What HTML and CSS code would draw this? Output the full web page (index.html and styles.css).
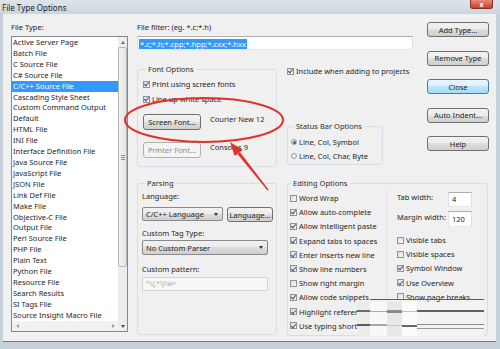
FILE: index.html
```html
<!DOCTYPE html>
<html lang="en">
<head>
    <meta charset="UTF-8">
    <title>File Type Options</title>
    <link rel="stylesheet" href="styles.css">
</head>
<body>
    <div class="window">
        <div class="titlebar">
            <span class="title">File Type Options</span>
            <span class="close">x</span>
        </div>

        <div class="client">
            <div class="types">
                <div class="lbl">File Type:</div>
                <div class="listbox">
                    <ul class="items">
                        <li>Active Server Page</li>
                        <li>Batch File</li>
                        <li>C Source File</li>
                        <li>C# Source File</li>
                        <li class="selected">C/C++ Source File</li>
                        <li>Cascading Style Sheet</li>
                        <li>Custom Command Output</li>
                        <li>Default</li>
                        <li>HTML File</li>
                        <li>INI File</li>
                        <li>Interface Definition File</li>
                        <li>Java Source File</li>
                        <li>JavaScript File</li>
                        <li>JSON File</li>
                        <li>Link Def File</li>
                        <li>Make File</li>
                        <li>Objective-C File</li>
                        <li>Output File</li>
                        <li>Perl Source File</li>
                        <li>PHP File</li>
                        <li>Plain Text</li>
                        <li>Python File</li>
                        <li>Resource File</li>
                        <li>Search Results</li>
                        <li>SI Tags File</li>
                        <li>Source Insight Macro File</li>
                    </ul>
                    <div class="vscroll">
                        <span class="arr up"></span>
                        <span class="thumb"><i></i></span>
                        <span class="track"></span>
                        <span class="arr down"></span>
                    </div>
                    <div class="hscroll">
                        <span class="arr left"></span>
                        <span class="track"></span>
                        <span class="arr right"></span>
                    </div>
                </div>
            </div>

            <div class="main">
                <div class="filter">
                    <div class="lbl">File filter: (eg. *.c;*.h)</div>
                    <div class="edit filter-edit"><span class="sel">*.c;*.h;*.cpp;*.hpp;*.cxx;*.hxx</span></div>
                </div>

                <div class="buttons">
                    <button class="btn">Add Type...</button>
                    <button class="btn">Remove Type</button>
                    <button class="btn default">Close</button>
                    <button class="btn">Auto Indent...</button>
                    <button class="btn">Help</button>
                </div>

                <fieldset class="group font-opts">
                    <legend>Font Options</legend>
                    <div class="row"><span class="cb on"></span>Print using screen fonts</div>
                    <div class="row gap5"><span class="cb on"></span>Line up white space</div>
                    <div class="font-row first">
                        <button class="btn font-btn">Screen Font...</button>
                        <span class="font-name">Courier New 12</span>
                    </div>
                    <div class="font-row second">
                        <button class="btn font-btn" disabled>Printer Font...</button>
                        <span class="font-name">Consolas 9</span>
                    </div>
                </fieldset>

                <div class="col2">
                    <div class="row include"><span class="cb on"></span>Include when adding to projects</div>
                    <fieldset class="group status">
                        <legend>Status Bar Options</legend>
                        <div class="row"><span class="rb on"></span>Line, Col, Symbol</div>
                        <div class="row gap4"><span class="rb"></span>Line, Col, Char, Byte</div>
                    </fieldset>
                </div>

                <fieldset class="group parsing">
                    <legend>Parsing</legend>
                    <div class="lbl">Language:</div>
                    <div class="lang-row">
                        <div class="combo lang">C/C++ Language</div>
                        <button class="btn lang-btn">Language...</button>
                    </div>
                    <div class="lbl tag-lbl">Custom Tag Type:</div>
                    <div class="combo parser">No Custom Parser</div>
                    <div class="lbl pattern-lbl">Custom pattern:</div>
                    <div class="edit pattern">^\{,*\}\w+</div>
                </fieldset>

                <fieldset class="group editing">
                    <legend>Editing Options</legend>
                    <div class="ed-cols">
                        <div class="ed-left">
                            <div class="row"><span class="cb"></span>Word Wrap</div>
                            <div class="row"><span class="cb on"></span>Allow auto-complete</div>
                            <div class="row"><span class="cb on"></span>Allow intelligent paste</div>
                            <div class="row"><span class="cb on"></span>Expand tabs to spaces</div>
                            <div class="row"><span class="cb on"></span>Enter inserts new line</div>
                            <div class="row"><span class="cb on"></span>Show line numbers</div>
                            <div class="row"><span class="cb"></span>Show right margin</div>
                            <div class="row"><span class="cb on"></span>Allow code snippets</div>
                            <div class="row"><span class="cb on"></span>Highlight references</div>
                            <div class="row"><span class="cb on"></span>Use typing shortcuts</div>
                        </div>
                        <div class="ed-right">
                            <div class="num-row"><span class="num-lbl">Tab width:</span><div class="edit num">4</div></div>
                            <div class="num-row margin-row"><span class="num-lbl">Margin width:</span><div class="edit num">120</div></div>
                            <div class="ed-checks">
                                <div class="row"><span class="cb"></span>Visible tabs</div>
                                <div class="row"><span class="cb"></span>Visible spaces</div>
                                <div class="row"><span class="cb on"></span>Symbol Window</div>
                                <div class="row"><span class="cb on"></span>Use Overview</div>
                                <div class="row"><span class="cb"></span>Show page breaks</div>
                            </div>
                        </div>
                    </div>
                </fieldset>
            </div>
        </div>

        <!-- red markup drawn over the screenshot -->
        <svg class="annot" width="500" height="349" viewBox="0 0 500 349">
            <ellipse cx="204" cy="120" rx="79" ry="22" fill="none" stroke="#e2302a" stroke-width="2"/>
            <polygon points="268.5,189.6 239.9,152.1 237.5,153.9 267.5,190.4" fill="#e2302a"/>
            <polygon points="230,142 242.6,149.9 234.7,156.1" fill="#e2302a"/>
        </svg>

        <div class="glitch"></div>
    </div>
</body>
</html>
```

FILE: styles.css
```css
* {
    box-sizing: border-box;
}

html, body {
    margin: 0;
}

body {
    width: 500px;
    height: 349px;
    overflow: hidden;
    font-family: "Noto Sans", "Liberation Sans", sans-serif;
    font-size: 7.5px;
    color: #1e1e1e;
    background: #c6d0da;
}

.window {
    position: relative;
    width: 500px;
    height: 349px;
    display: flex;
    flex-direction: column;
    background: #c6d0da;
}

.titlebar {
    height: 14px;
    display: flex;
    align-items: center;
    padding-left: 2px;
    background: linear-gradient(#dde4ec, #cbd5df);
}

.title {
    font-size: 8px;
    color: #1b1b1b;
}

.close {
    align-self: flex-start;
    margin-left: auto;
    margin-right: 7px;
    width: 23px;
    height: 9px;
    display: flex;
    justify-content: center;
    align-items: center;
    font-size: 7px;
    font-weight: bold;
    line-height: 1;
    color: #fff;
    background: linear-gradient(#e88b7c, #c7402c);
    border: 1px solid #8c3024;
    border-top: none;
    border-radius: 0 0 3px 3px;
}

.client {
    flex: 1;
    display: flex;
    margin: 0 4px 7px 3px;
    padding: 8px 0 0 8px;
    background: #f0f0f0;
    border-bottom: 1px solid #6f777f;
}

.lbl {
    line-height: 10px;
    white-space: nowrap;
}

/* file type list */
.types {
    width: 117px;
    display: flex;
    flex-direction: column;
}

.types .lbl {
    margin-bottom: 4px;
}

.listbox {
    height: 296px;
    border: 1px solid #828790;
    background: #fff;
    display: grid;
    grid-template-columns: 1fr 9px;
    grid-template-rows: 1fr 10px;
}

.items {
    list-style: none;
    margin: 0;
    padding: 0;
    overflow: hidden;
}

.items li {
    height: 10.92px;
    line-height: 10.92px;
    padding-left: 1px;
    white-space: nowrap;
}

.items li.selected {
    background: #3399ff;
    color: #fff;
}

.vscroll {
    grid-column: 2;
    grid-row: 1 / 3;
    display: flex;
    flex-direction: column;
    background: #ececec;
}

.hscroll {
    grid-column: 1;
    grid-row: 2;
    display: flex;
    background: #f2f2f2;
}

.track {
    flex: 1;
}

.arr {
    width: 9px;
    height: 10px;
    flex: none;
    display: flex;
    justify-content: center;
    align-items: center;
}

.hscroll .arr {
    width: 10px;
}

.arr::after {
    content: '';
    border: 2.5px solid transparent;
}

.arr.up::after {
    border-bottom: 3px solid #6a6a6a;
    border-top-width: 0;
}

.arr.down::after {
    border-top: 3px solid #4a4a4a;
    border-bottom-width: 0;
}

.arr.left::after {
    border-right: 3px solid #a0a0a0;
    border-left-width: 0;
}

.arr.right::after {
    border-left: 3px solid #a0a0a0;
    border-right-width: 0;
}

.thumb {
    height: 220px;
    flex: none;
    border: 1px solid #b5b5b5;
    border-radius: 2px;
    background: linear-gradient(to right, #f4f4f4, #e3e3e3);
    display: flex;
    justify-content: center;
    align-items: center;
}

.thumb i {
    width: 4px;
    height: 5px;
    background: repeating-linear-gradient(#8c8c8c 0 1px, transparent 1px 2px);
}

/* right side */
.main {
    margin-left: 9px;
    display: grid;
    grid-template-columns: 140px 136px 76px;
    align-content: start;
}

.filter {
    grid-column: 1 / 3;
    grid-row: 1;
}

.edit {
    height: 14px;
    background: #fff;
    border: 1px solid;
    border-color: #abadb3 #dbdfe6 #e3e9ef #e2e3ea;
    line-height: 12px;
    padding-left: 3px;
    white-space: nowrap;
}

.filter-edit {
    margin-top: 4px;
    padding-left: 1px;
    padding-top: 1px;
}

.sel {
    display: inline-block;
    height: 10px;
    line-height: 10px;
    padding: 0 1px;
    background: #3399ff;
    color: #fff;
}

.buttons {
    grid-column: 3;
    grid-row: 1 / 3;
    justify-self: end;
    align-self: start;
    width: 62px;
    display: flex;
    flex-direction: column;
    gap: 13.5px;
}

.btn {
    height: 15px;
    padding: 0;
    font: inherit;
    color: #1e1e1e;
    border: 1px solid #707070;
    border-radius: 3px;
    background: linear-gradient(#f2f2f2 0%, #ebebeb 50%, #dddddd 50%, #cfcfcf 100%);
    white-space: nowrap;
}

.btn.default {
    border-color: #3c7fb1;
    background: linear-gradient(#eaf6fd 0%, #d9f0fc 50%, #bee6fd 50%, #a7d9f5 100%);
}

.btn:disabled {
    border-color: #adb2b5;
    background: #f4f4f4;
    color: #8a8a8a;
}

.group {
    margin: 0;
    padding: 0;
    min-width: 0;
    border: 1px solid #d5dfe5;
    border-radius: 3px;
}

.group legend {
    margin-left: 3px;
    padding: 0 2px;
    line-height: 10px;
    color: #2a2a2a;
}

.row {
    height: 10px;
    line-height: 10px;
    display: flex;
    align-items: center;
    gap: 2px;
    white-space: nowrap;
}

.gap5 {
    margin-top: 5px;
}

.gap4 {
    margin-top: 4px;
}

.cb {
    width: 7px;
    height: 7px;
    flex: none;
    border: 1px solid #939393;
    background: linear-gradient(135deg, #dadada, #fafafa);
    display: flex;
    justify-content: center;
    align-items: center;
}

.cb.on::after {
    content: '';
    width: 2px;
    height: 4px;
    margin-top: -1px;
    border: solid #3f5486;
    border-width: 0 1.4px 1.4px 0;
    transform: rotate(40deg);
}

.rb {
    width: 6px;
    height: 6px;
    flex: none;
    border: 1px solid #9a9a9a;
    border-radius: 50%;
    background: radial-gradient(#fff, #dcdcdc);
    display: flex;
    justify-content: center;
    align-items: center;
}

.rb.on::after {
    content: '';
    width: 3px;
    height: 3px;
    border-radius: 50%;
    background: #2d5f9e;
}

/* font options */
.font-opts {
    grid-column: 1;
    grid-row: 2;
    margin-top: 14px;
    height: 103px;
    padding: 5px 0 0 5px;
}

.font-row {
    display: flex;
    align-items: flex-start;
}

.font-row.first {
    margin-top: 10px;
}

.font-row.second {
    margin-top: 12px;
}

.font-btn {
    width: 58px;
    height: 16px;
}

.font-name {
    margin-left: 9px;
    line-height: 10px;
    white-space: nowrap;
}

/* include + status bar */
.col2 {
    grid-column: 2;
    grid-row: 2;
    margin-left: 10px;
    display: flex;
    flex-direction: column;
}

.include {
    margin-top: 16px;
}

.status {
    margin-top: 45px;
    width: 96px;
    height: 44px;
    padding: 6px 0 0 3px;
}

/* parsing */
.parsing {
    grid-column: 1;
    grid-row: 3;
    margin-top: 11px;
    height: 157px;
    padding: 3px 0 0 4px;
}

.lang-row {
    display: flex;
    gap: 4px;
    margin-top: 6px;
}

.combo {
    height: 14px;
    display: flex;
    align-items: center;
    justify-content: space-between;
    padding: 0 4px 0 3px;
    border: 1px solid #8a8a8a;
    border-radius: 2px;
    background: linear-gradient(#f2f2f2 0%, #ebebeb 50%, #dddddd 50%, #cfcfcf 100%);
    white-space: nowrap;
}

.combo::after {
    content: '';
    border: 2px solid transparent;
    border-top: 3px solid #333;
    border-bottom-width: 0;
}

.combo.lang {
    width: 81px;
}

.combo.parser {
    width: 126px;
    height: 15px;
    margin-top: 2px;
}

.lang-btn {
    width: 46px;
}

.tag-lbl {
    margin-top: 6px;
}

.pattern-lbl {
    margin-top: 9px;
}

.pattern {
    width: 126px;
    margin-top: 3px;
    background: #f7f7f7;
    border-color: #d0d3d8;
    color: #a8a8a8;
    font-size: 6.5px;
}

/* editing options */
.editing {
    grid-column: 2 / 4;
    grid-row: 3;
    justify-self: start;
    margin: 11px 0 0 10px;
    width: 201px;
    height: 158px;
}

.ed-cols {
    display: flex;
    height: 148px;
}

.ed-left {
    width: 98px;
    padding: 5px 0 0 2px;
    display: flex;
    flex-direction: column;
    gap: 4.2px;
}

.ed-right {
    flex: 1;
    padding: 4px 0 0 10px;
    border-left: 1px solid #e4e4e4;
}

.num-row {
    display: flex;
    align-items: flex-start;
}

.num-lbl {
    width: 51px;
    line-height: 10px;
    white-space: nowrap;
}

.num {
    width: 24px;
    height: 15px;
    line-height: 13px;
}

.margin-row {
    margin-top: 4px;
}

.margin-row .num-lbl {
    margin-top: 1px;
}

.margin-row .num {
    height: 16px;
    line-height: 14px;
}

.ed-checks {
    margin-top: 8px;
    display: flex;
    flex-direction: column;
    gap: 4.2px;
}

/* overlays */
.annot {
    position: absolute;
    left: 0;
    top: 0;
    pointer-events: none;
}

.glitch {
    position: absolute;
    left: 357px;
    top: 299px;
    width: 127px;
    height: 37px;
    background:
        linear-gradient(#5e5e5e, #5e5e5e) 13px 0 / 114px 1px no-repeat,
        linear-gradient(#6e6e6e, #6e6e6e) 0 11px / 13px 2px no-repeat,
        linear-gradient(#a8a8a8, #a8a8a8) 13px 12px / 17px 1px no-repeat,
        linear-gradient(#8a8a8a, #8a8a8a) 30px 11px / 15px 3px no-repeat,
        linear-gradient(#c4c4c4, #c4c4c4) 45px 12px / 15px 1px no-repeat,
        linear-gradient(#616161, #616161) 60px 11px / 67px 2px no-repeat,
        linear-gradient(#5a5a5a, #5a5a5a) 0 25px / 13px 2px no-repeat,
        linear-gradient(#a6a6a6, #a6a6a6) 13px 25px / 17px 2px no-repeat,
        linear-gradient(#c6c6c6, #c6c6c6) 30px 26px / 15px 1px no-repeat,
        linear-gradient(#666, #666) 45px 26px / 15px 2px no-repeat,
        linear-gradient(#8c8c8c, #8c8c8c) 60px 25px / 67px 1px no-repeat,
        linear-gradient(#9a9a9a, #9a9a9a) 60px 29px / 67px 1px no-repeat,
        linear-gradient(to right, #ececec 13px, #f8f8f8 13px 30px, #e8e8e8 30px 45px, #fbfbfb 45px 60px, #f3f3f3 60px) 0 3px / 100% 34px no-repeat;
}
```
